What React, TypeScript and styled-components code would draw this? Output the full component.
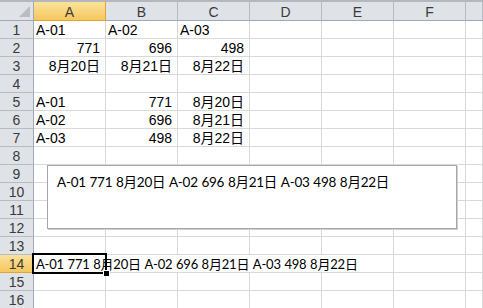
import React from "react";
import styled, { createGlobalStyle, css } from "styled-components";

const GlobalStyle = createGlobalStyle`
  html, body {
    margin: 0;
    padding: 0;
    background: #ffffff;
    overflow: hidden;
  }
`;

const gridLine = "#d9d9d9";
const headerLine = "#9fa8b4";
const cellFont = `"Liberation Sans", "Noto Sans CJK JP", sans-serif`;
const calibriFont = `Lato, "Noto Sans CJK JP", sans-serif`;

const columns = ["A", "B", "C", "D", "E", "F", ""];

type RowData = { cells: { text: string; align?: "left" | "right" }[] };

const rows: RowData[] = [
  { cells: [{ text: "A-01" }, { text: "A-02" }, { text: "A-03" }] },
  { cells: [{ text: "771", align: "right" }, { text: "696", align: "right" }, { text: "498", align: "right" }] },
  { cells: [{ text: "8月20日", align: "right" }, { text: "8月21日", align: "right" }, { text: "8月22日", align: "right" }] },
  { cells: [] },
  { cells: [{ text: "A-01" }, { text: "771", align: "right" }, { text: "8月20日", align: "right" }] },
  { cells: [{ text: "A-02" }, { text: "696", align: "right" }, { text: "8月21日", align: "right" }] },
  { cells: [{ text: "A-03" }, { text: "498", align: "right" }, { text: "8月22日", align: "right" }] },
];

const joined = "A-01 771 8月20日 A-02 696 8月21日 A-03 498 8月22日";

const Sheet = styled.div`
  position: relative;
  display: grid;
  grid-template-columns: 34px repeat(6, 72px) 1fr;
  grid-template-rows: 21px;
  grid-auto-rows: 18px;
  width: 483px;
  height: 308px;
  overflow: hidden;
  font-family: ${cellFont};
  line-height: 16px;
`;

const selectedHeader = css`
  background: linear-gradient(#fbe29a, #f5c75e);
  border-right-color: #e0a43c;
  border-bottom-color: #e0a43c;
`;

const Corner = styled.div`
  position: relative;
  box-sizing: border-box;
  background: #dfe3e8;
  border-top: 2px solid #b4b8be;
  border-right: 1px solid ${headerLine};
  border-bottom: 1px solid ${headerLine};

  &::after {
    content: "";
    position: absolute;
    right: 3px;
    bottom: 3px;
    width: 0;
    height: 0;
    border-left: 11px solid transparent;
    border-bottom: 11px solid #b9bdc3;
  }
`;

const ColHeader = styled.div<{ $selected?: boolean }>`
  box-sizing: border-box;
  display: flex;
  align-items: center;
  justify-content: center;
  background: #dfe3e8;
  border-top: 2px solid #b4b8be;
  border-right: 1px solid #b6bcc4;
  border-bottom: 1px solid ${headerLine};
  font-size: 14px;
  color: #3a3a3a;
  padding-top: 1px;
  ${({ $selected }) => $selected && selectedHeader}
`;

const RowHeader = styled.div<{ $selected?: boolean }>`
  box-sizing: border-box;
  display: flex;
  align-items: center;
  justify-content: center;
  background: #dfe3e8;
  border-right: 1px solid ${headerLine};
  border-bottom: 1px solid #b6bcc4;
  font-size: 14px;
  color: #3a3a3a;
  ${({ $selected }) => $selected && selectedHeader}
`;

const Cell = styled.div<{ $align?: "left" | "right"; $span?: number }>`
  box-sizing: border-box;
  display: flex;
  align-items: center;
  justify-content: ${({ $align }) => ($align === "right" ? "flex-end" : "flex-start")};
  grid-column: ${({ $span }) => ($span ? `span ${$span}` : "auto")};
  padding: 1px 5px 0 2px;
  border-right: 1px solid ${gridLine};
  border-bottom: 1px solid ${gridLine};
  font-size: 14px;
  color: #000000;
  white-space: nowrap;
  overflow: visible;
`;

const OverflowText = styled.span`
  font-family: ${calibriFont};
  font-size: 13px;
  letter-spacing: -0.2px;
  word-spacing: 0.5px;
`;

const TextBox = styled.div`
  position: absolute;
  left: 47px;
  top: 165px;
  width: 410px;
  height: 64px;
  box-sizing: border-box;
  background: #ffffff;
  border: 1px solid #a6a6a6;
  box-shadow: 1px 1px 0 #d0d0d0;
  padding: 8px 9px;
  font-family: ${calibriFont};
  font-size: 13.5px;
  line-height: 16px;
  letter-spacing: -0.25px;
  word-spacing: 0.5px;
  white-space: nowrap;
`;

const Selection = styled.div`
  position: absolute;
  left: 32px;
  top: 253px;
  width: 75px;
  height: 21px;
  box-sizing: border-box;
  border: 2px solid #000000;
  pointer-events: none;

  &::after {
    content: "";
    position: absolute;
    right: -5px;
    bottom: -5px;
    width: 5px;
    height: 5px;
    background: #000000;
    border: 1px solid #ffffff;
  }
`;

export default function App() {
  const total = 16;
  return (
    <>
      <GlobalStyle />
      <Sheet>
        <Corner />
        {columns.map((c, i) => (
          <ColHeader key={`h${i}`} $selected={c === "A"}>
            {c}
          </ColHeader>
        ))}
        {Array.from({ length: total }, (_, r) => {
          const num = r + 1;
          if (num === 14) {
            return (
              <React.Fragment key={num}>
                <RowHeader $selected>{num}</RowHeader>
                <Cell $span={5}>
                  <OverflowText>{joined}</OverflowText>
                </Cell>
                <Cell />
                <Cell />
              </React.Fragment>
            );
          }
          const data = rows[r]?.cells ?? [];
          return (
            <React.Fragment key={num}>
              <RowHeader>{num}</RowHeader>
              {columns.map((_, c) => (
                <Cell key={c} $align={data[c]?.align}>
                  {data[c]?.text}
                </Cell>
              ))}
            </React.Fragment>
          );
        })}
        <TextBox>{joined}</TextBox>
        <Selection />
      </Sheet>
    </>
  );
}
